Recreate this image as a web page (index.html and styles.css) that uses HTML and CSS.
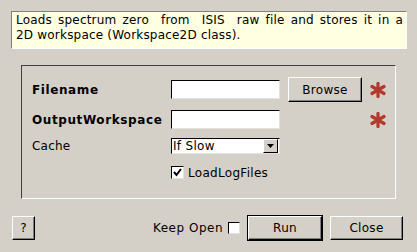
FILE: index.html
```html
<!DOCTYPE html>
<html lang="en">
<head>
    <meta charset="UTF-8">
    <title>LoadRaw</title>
    <link rel="stylesheet" href="styles.css">
</head>
<body>
    <!-- Algorithm description -->
    <div class="description">
        <div class="desc-line justified">Loads spectrum zero&nbsp; from&nbsp; ISIS&nbsp; raw file and stores it in a</div>
        <div class="desc-line">2D workspace (Workspace2D class).</div>
    </div>

    <!-- Properties -->
    <div class="properties">
        <div class="label bold">Filename</div>
        <div class="field"></div>
        <button class="button browse">Browse</button>
        <svg class="star" viewBox="0 0 16 16"><g><line x1="8" y1="1.5" x2="8" y2="14.5"/><line x1="2" y1="4.5" x2="14" y2="11.5"/><line x1="2" y1="11.5" x2="14" y2="4.5"/></g></svg>

        <div class="label bold">OutputWorkspace</div>
        <div class="field"></div>
        <div></div>
        <svg class="star" viewBox="0 0 16 16"><g><line x1="8" y1="1.5" x2="8" y2="14.5"/><line x1="2" y1="4.5" x2="14" y2="11.5"/><line x1="2" y1="11.5" x2="14" y2="4.5"/></g></svg>

        <div class="label">Cache</div>
        <div class="combo">
            <span class="combo-text">If Slow</span>
            <span class="combo-arrow"><svg viewBox="0 0 7 4" width="7" height="4"><polygon points="0,0 7,0 3.5,4" fill="#000"/></svg></span>
        </div>
        <div></div>
        <div></div>

        <div></div>
        <label class="check-row">
            <span class="checkbox"><svg viewBox="0 0 9 9" width="9" height="9"><polyline points="1,4 3.5,7 8,1" fill="none" stroke="#000" stroke-width="2"/></svg></span>
            LoadLogFiles
        </label>
        <div></div>
        <div></div>
    </div>

    <!-- Dialog buttons -->
    <div class="actions">
        <button class="button help">?</button>
        <span class="spacer"></span>
        <span class="keep-open">Keep Open</span>
        <span class="checkbox"></span>
        <button class="button run">Run</button>
        <button class="button close">Close</button>
    </div>
</body>
</html>
```

FILE: styles.css
```css
/* General Styling */
body {
    margin: 0;
    padding: 0;
    width: 417px;
    height: 252px;
    background: #d4d0c8;
    font-family: 'DejaVu Sans', sans-serif;
    font-size: 12px;
    color: #000;
    overflow: hidden;
}

/* Description box */
.description {
    margin: 11px 0 0 11px;
    width: 387px;
    height: 35px;
    padding: 1px 3px 0 4px;
    background: #ffffe1;
    border: 1px solid;
    border-color: #808080 #fff #fff #808080;
    line-height: 15px;
}
.desc-line {
    white-space: nowrap;
    letter-spacing: 0.2px;
}
.justified {
    white-space: normal;
    text-align: justify;
    text-align-last: justify;
}

/* Properties group */
.properties {
    display: grid;
    grid-template-columns: 131px 109px 74px 16px;
    grid-template-rows: 25px 35px 18px 35px;
    column-gap: 8px;
    align-items: center;
    margin: 16px 0 0 21px;
    width: 353px;
    height: 113px;
    padding: 11px 10px 8px 10px;
    border: 1px solid;
    border-color: #404040 #fff #fff #404040;
}
.label {
    white-space: nowrap;
    letter-spacing: 0.2px;
}
.bold {
    font-weight: bold;
    letter-spacing: 0.6px;
}
.field {
    height: 17px;
    background: #fff;
    border: 1px solid;
    border-color: #000 #e4e2dc #e4e2dc #000;
}
.star {
    width: 16px;
    height: 16px;
}
.star g {
    stroke: #b23a2c;
    stroke-width: 3.2;
    stroke-linecap: round;
}

/* Combo box */
.combo {
    display: flex;
    align-items: center;
    height: 14px;
    background: #fff;
    border: 1px solid;
    border-color: #000 #e4e2dc #e4e2dc #000;
}
.combo-text {
    flex: 1;
    padding-left: 1px;
    line-height: 14px;
    letter-spacing: 0.3px;
}
.combo-arrow {
    display: flex;
    align-items: center;
    justify-content: center;
    width: 13px;
    height: 12px;
    margin-right: 1px;
    background: #d4d0c8;
    border: 1px solid;
    border-color: #fff #000 #000 #fff;
}

/* Checkboxes */
.check-row {
    display: flex;
    align-items: center;
    grid-column: span 3;
    gap: 4px;
    letter-spacing: 0.3px;
}
.checkbox {
    display: inline-flex;
    align-items: center;
    justify-content: center;
    box-sizing: border-box;
    width: 13px;
    height: 13px;
    background: #fff;
    border: 1px solid;
    border-color: #000 #e4e2dc #e4e2dc #000;
}

/* Buttons */
.button {
    box-sizing: border-box;
    margin: 0;
    padding: 0;
    font-family: 'DejaVu Sans', sans-serif;
    font-size: 12px;
    letter-spacing: 0.3px;
    color: #000;
    background: #d4d0c8;
    border: 1px solid;
    border-color: #fff #000 #000 #fff;
    box-shadow: inset -1px -1px #808080;
}
.browse {
    width: 74px;
    height: 25px;
}

/* Bottom row */
.actions {
    display: flex;
    align-items: center;
    margin: 16px 14px 0 12px;
    height: 26px;
}
.help {
    width: 23px;
    height: 24px;
}
.spacer {
    flex: 1;
}
.keep-open {
    margin-right: 5px;
    letter-spacing: 0.5px;
}
.actions .checkbox {
    width: 12px;
    height: 12px;
    margin-right: 7px;
}
.run {
    width: 76px;
    height: 26px;
    border: 2px solid #000;
    border-color: #fff #000 #000 #fff;
    outline: 1px solid #000;
    outline-offset: -1px;
    margin-right: 7px;
}
.close {
    width: 73px;
    height: 24px;
}
```
